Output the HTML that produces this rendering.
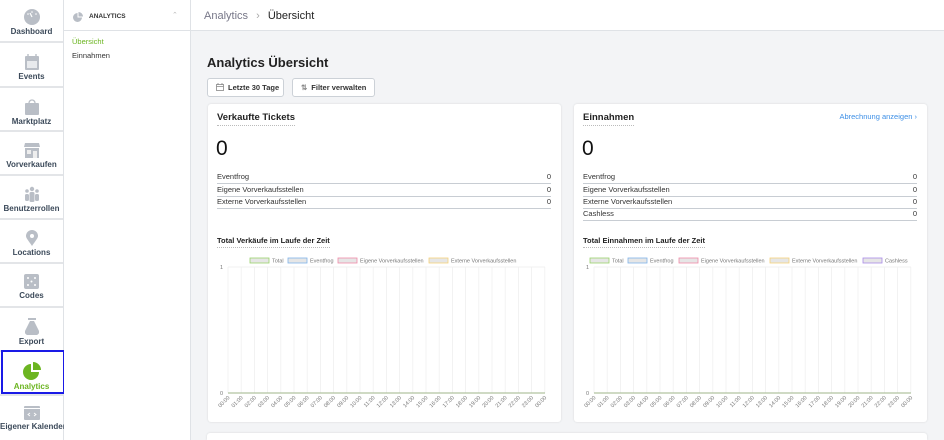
<!DOCTYPE html>
<html style="width:944px;height:440px;overflow:hidden"><head><meta charset="utf-8"><style>
*{box-sizing:border-box;margin:0;padding:0}
body{width:944px;height:440px;overflow:hidden;font-family:"Liberation Sans",sans-serif;background:#f3f4f6;position:relative;color:#222}
.nav{position:absolute;left:0;top:0;width:64px;height:440px;background:#fff;border-right:1px solid #dfe2e6}
.ni{position:absolute;left:0;width:63px;height:43px;border-bottom:2px solid #e3e5e8;text-align:center;font-size:8px;font-weight:bold;color:#3c4a5a}
.ni svg{display:block;margin:9px auto 2px}
.ni span{white-space:nowrap}
.side{position:absolute;left:64px;top:0;width:127px;height:440px;background:#fff;border-right:1px solid #dfe2e6}
.top{position:absolute;left:191px;top:0;width:753px;height:31px;background:#fff;border-bottom:1px solid #dfe2e6;font-size:11px;padding:10px 0 0 13px;color:#222}
.card{position:absolute;background:#fff;border-radius:3px;box-shadow:0 0 2px rgba(0,0,0,.12)}
.ct{position:absolute;font-size:9.5px;font-weight:bold;color:#222;border-bottom:1px dotted #bbb;padding-bottom:2px}
.big{position:absolute;font-size:21px;font-weight:300;color:#111}
.row{position:absolute;height:12.5px;font-size:7.5px;color:#333;border-bottom:1px solid #c8cdd3;line-height:11px}
.row b{position:absolute;right:0;font-weight:normal}
.btn{position:absolute;top:78px;height:19px;background:#fff;border:1px solid #ccd1d7;border-radius:3px;font-size:7.5px;font-weight:bold;color:#333;line-height:17px;padding-left:8px}
</style></head><body>
<div class="nav">
<div class="ni" style="top:0"><svg width="16" height="16" viewBox="0 0 16 16"><circle cx="8" cy="8" r="8" fill="#b9bec6"/><path d="M8 8 L6 4" stroke="#fff" stroke-width="1.2"/><circle cx="8" cy="3" r=".8" fill="#fff"/><circle cx="4" cy="5" r=".8" fill="#fff"/><circle cx="12" cy="5" r=".8" fill="#fff"/></svg><span>Dashboard</span></div>
<div class="ni" style="top:45px"><svg width="14" height="16" viewBox="0 0 14 16"><rect x="0" y="2" width="14" height="14" rx="1" fill="#b9bec6"/><rect x="2" y="7" width="10" height="7" fill="#e8eaed"/><path d="M3 0v4M11 0v4" stroke="#b9bec6" stroke-width="1.4"/></svg><span>Events</span></div>
<div class="ni" style="top:89px"><svg width="14" height="17" viewBox="0 0 14 17"><path d="M4 5a3 3 0 0 1 6 0" stroke="#b9bec6" fill="none" stroke-width="1.3"/><rect x="0" y="5" width="14" height="12" rx="1" fill="#b9bec6"/></svg><span>Marktplatz</span></div>
<div class="ni" style="top:133px"><svg width="16" height="16" viewBox="0 0 16 16"><path d="M1 1h14l1 4H0z" fill="#b9bec6"/><rect x="1" y="6" width="14" height="10" fill="#b9bec6"/><rect x="3" y="8" width="4" height="4" fill="#eee"/><rect x="9" y="9" width="4" height="7" fill="#eee"/></svg><span>Vorverkaufen</span></div>
<div class="ni" style="top:177px"><svg width="16" height="16" viewBox="0 0 16 16"><circle cx="8" cy="3" r="2.2" fill="#b9bec6"/><circle cx="3" cy="5" r="1.8" fill="#b9bec6"/><circle cx="13" cy="5" r="1.8" fill="#b9bec6"/><rect x="5.5" y="6" width="5" height="10" rx="1.5" fill="#b9bec6"/><rect x="1" y="8" width="4" height="7" rx="1.5" fill="#b9bec6"/><rect x="11" y="8" width="4" height="7" rx="1.5" fill="#b9bec6"/></svg><span>Benutzerrollen</span></div>
<div class="ni" style="top:221px"><svg width="12" height="16" viewBox="0 0 12 16"><path d="M6 16C2 10 0 8 0 6a6 6 0 0 1 12 0c0 2-2 4-6 10z" fill="#b9bec6"/><circle cx="6" cy="6" r="2" fill="#fff"/></svg><span>Locations</span></div>
<div class="ni" style="top:265px"><svg width="15" height="15" viewBox="0 0 15 15"><rect width="15" height="15" rx="2" fill="#b9bec6"/><circle cx="4" cy="4" r="1" fill="#fff"/><circle cx="11" cy="4" r="1" fill="#fff"/><circle cx="7.5" cy="7.5" r="1" fill="#fff"/><circle cx="4" cy="11" r="1" fill="#fff"/><circle cx="11" cy="11" r="1" fill="#fff"/></svg><span>Codes</span></div>
<div class="ni" style="top:309px"><svg width="14" height="17" viewBox="0 0 14 17"><rect x="3" y="0" width="8" height="2" fill="#b9bec6"/><path d="M5 3h4l5 10a3 3 0 0 1-3 4H3a3 3 0 0 1-3-4z" fill="#b9bec6"/></svg><span>Export</span></div>
<div class="ni" style="top:353px;color:#6cb521"><svg width="18" height="18" viewBox="0 0 18 18"><path d="M8 2A8 8 0 1 0 16 10H8z" fill="#6cb521"/><path d="M10 0A8 8 0 0 1 18 8H10z" fill="#6cb521"/></svg><span>Analytics</span></div>
<div style="position:absolute;left:1px;top:350px;width:64px;height:44px;border:2.5px solid #1a1ae6"></div>
<div class="ni" style="top:397px;border-bottom:none"><svg width="16" height="14" viewBox="0 0 16 14"><rect width="16" height="14" rx="1" fill="#b9bec6"/><rect x="0" y="2" width="16" height="1" fill="#fff"/><path d="M6 7l-2 1.5 2 1.5M10 7l2 1.5-2 1.5" stroke="#fff" fill="none" stroke-width=".9"/></svg><span>Eigener Kalender</span></div>
</div>
<div class="side">
<div style="position:absolute;left:0;top:0;width:126px;height:31px;border-bottom:1px solid #dfe2e6"></div>
<svg style="position:absolute;left:9px;top:12px" width="10" height="10" viewBox="0 0 10 10"><path d="M4.5 1A4.5 4.5 0 1 0 9 5.5H4.5z" fill="#b9bec6"/><path d="M5.5 0A4.5 4.5 0 0 1 10 4.5H5.5z" fill="#b9bec6"/></svg>
<div style="position:absolute;left:25px;top:13px;font-size:6.5px;font-weight:bold;color:#333">ANALYTICS</div>
<div style="position:absolute;left:108px;top:11px;font-size:7px;color:#bbb">&#8963;</div>
<div style="position:absolute;left:8px;top:37px;font-size:7.5px;color:#6cb521">Übersicht</div>
<div style="position:absolute;left:8px;top:51px;font-size:7.5px;color:#333">Einnahmen</div>
</div>
<div class="top"><span style="color:#778">Analytics</span> <span style="color:#aaa;margin:0 5px">›</span> Übersicht</div>
<div style="position:absolute;left:207px;top:55px;font-size:13px;font-weight:bold;color:#222">Analytics Übersicht</div>
<div class="btn" style="left:207px;width:77px"><svg width="8" height="8" viewBox="0 0 8 8" style="vertical-align:-1px;margin-right:4px"><rect x=".5" y="1.5" width="7" height="6" fill="none" stroke="#888" stroke-width=".8"/><path d="M.5 3.5h7M2 0v2M6 0v2" stroke="#888" stroke-width=".8"/></svg>Letzte 30 Tage</div>
<div class="btn" style="left:292px;width:83px"><span style="color:#888;margin-right:4px">⇅</span>Filter verwalten</div>

<div class="card" style="left:208px;top:104px;width:353px;height:318px">
<div class="ct" style="left:9px;top:8px">Verkaufte Tickets</div>
<div class="big" style="left:8px;top:33px">0</div>
<div class="row" style="left:9px;top:67px;width:334px">Eventfrog<b>0</b></div>
<div class="row" style="left:9px;top:80px;width:334px">Eigene Vorverkaufsstellen<b>0</b></div>
<div class="row" style="left:9px;top:92px;width:334px">Externe Vorverkaufsstellen<b>0</b></div>
<div class="ct" style="left:9px;top:132px;font-size:7.5px">Total Verkäufe im Laufe der Zeit</div>
</div>
<div class="card" style="left:574px;top:104px;width:353px;height:318px">
<div class="ct" style="left:9px;top:8px">Einnahmen</div>
<div style="position:absolute;right:10px;top:8px;font-size:7.5px;color:#3d8fe6">Abrechnung anzeigen ›</div>
<div class="big" style="left:8px;top:33px">0</div>
<div class="row" style="left:9px;top:67px;width:334px">Eventfrog<b>0</b></div>
<div class="row" style="left:9px;top:80px;width:334px">Eigene Vorverkaufsstellen<b>0</b></div>
<div class="row" style="left:9px;top:92px;width:334px">Externe Vorverkaufsstellen<b>0</b></div>
<div class="row" style="left:9px;top:104px;width:334px">Cashless<b>0</b></div>
<div class="ct" style="left:9px;top:132px;font-size:7.5px">Total Einnahmen im Laufe der Zeit</div>
</div>
<div class="card" style="left:207px;top:433px;width:720px;height:7px;border-radius:3px 3px 0 0"></div>

<svg style="position:absolute;left:208px;top:250px" width="353" height="170" font-family="Liberation Sans" font-size="5.5" fill="#777">
<rect x="42" y="8" width="19" height="5" fill="#e6e6e6" stroke="#9ad36b" stroke-width=".8"/><text x="64" y="12.5">Total</text>
<rect x="80" y="8" width="19" height="5" fill="#e6e6e6" stroke="#7fb3ea" stroke-width=".8"/><text x="102" y="12.5">Eventfrog</text>
<rect x="130" y="8" width="19" height="5" fill="#e6e6e6" stroke="#f08aa8" stroke-width=".8"/><text x="152" y="12.5">Eigene Vorverkaufsstellen</text>
<rect x="221" y="8" width="19" height="5" fill="#e6e6e6" stroke="#f5d27a" stroke-width=".8"/><text x="243" y="12.5">Externe Vorverkaufsstellen</text>
<g id="plot">
<path d="M20 17V143M33.2 17V143M46.4 17V143M59.6 17V143M72.8 17V143M86 17V143M99.2 17V143M112.4 17V143M125.6 17V143M138.8 17V143M152 17V143M165.2 17V143M178.4 17V143M191.6 17V143M204.8 17V143M218 17V143M231.2 17V143M244.4 17V143M257.6 17V143M270.8 17V143M284 17V143M297.2 17V143M310.4 17V143M323.6 17V143M336.8 17V143" stroke="#eee" stroke-width=".7"/>
<path d="M20 17H337" stroke="#eee" stroke-width=".7"/>
<path d="M20 143H337" stroke="#9fb58a" stroke-width=".9"/>
<text x="12" y="19">1</text><text x="12" y="145">0</text>
<g text-anchor="end">
<text transform="translate(22,148) rotate(-45)">00:00</text><text transform="translate(35.2,148) rotate(-45)">01:00</text><text transform="translate(48.4,148) rotate(-45)">02:00</text><text transform="translate(61.6,148) rotate(-45)">03:00</text><text transform="translate(74.8,148) rotate(-45)">04:00</text><text transform="translate(88,148) rotate(-45)">05:00</text><text transform="translate(101.2,148) rotate(-45)">06:00</text><text transform="translate(114.4,148) rotate(-45)">07:00</text><text transform="translate(127.6,148) rotate(-45)">08:00</text><text transform="translate(140.8,148) rotate(-45)">09:00</text><text transform="translate(154,148) rotate(-45)">10:00</text><text transform="translate(167.2,148) rotate(-45)">11:00</text><text transform="translate(180.4,148) rotate(-45)">12:00</text><text transform="translate(193.6,148) rotate(-45)">13:00</text><text transform="translate(206.8,148) rotate(-45)">14:00</text><text transform="translate(220,148) rotate(-45)">15:00</text><text transform="translate(233.2,148) rotate(-45)">16:00</text><text transform="translate(246.4,148) rotate(-45)">17:00</text><text transform="translate(259.6,148) rotate(-45)">18:00</text><text transform="translate(272.8,148) rotate(-45)">19:00</text><text transform="translate(286,148) rotate(-45)">20:00</text><text transform="translate(299.2,148) rotate(-45)">21:00</text><text transform="translate(312.4,148) rotate(-45)">22:00</text><text transform="translate(325.6,148) rotate(-45)">23:00</text><text transform="translate(338.8,148) rotate(-45)">00:00</text>
</g>
</g>
</svg>
<svg style="position:absolute;left:574px;top:250px" width="353" height="170" font-family="Liberation Sans" font-size="5.5" fill="#777">
<rect x="16" y="8" width="19" height="5" fill="#e6e6e6" stroke="#9ad36b" stroke-width=".8"/><text x="38" y="12.5">Total</text>
<rect x="54" y="8" width="19" height="5" fill="#e6e6e6" stroke="#7fb3ea" stroke-width=".8"/><text x="76" y="12.5">Eventfrog</text>
<rect x="105" y="8" width="19" height="5" fill="#e6e6e6" stroke="#f08aa8" stroke-width=".8"/><text x="127" y="12.5">Eigene Vorverkaufsstellen</text>
<rect x="196" y="8" width="19" height="5" fill="#e6e6e6" stroke="#f5d27a" stroke-width=".8"/><text x="218" y="12.5">Externe Vorverkaufsstellen</text>
<rect x="289" y="8" width="19" height="5" fill="#e6e6e6" stroke="#a98ae8" stroke-width=".8"/><text x="311" y="12.5">Cashless</text>
<use href="#plot"/>
</svg>
</body></html>
